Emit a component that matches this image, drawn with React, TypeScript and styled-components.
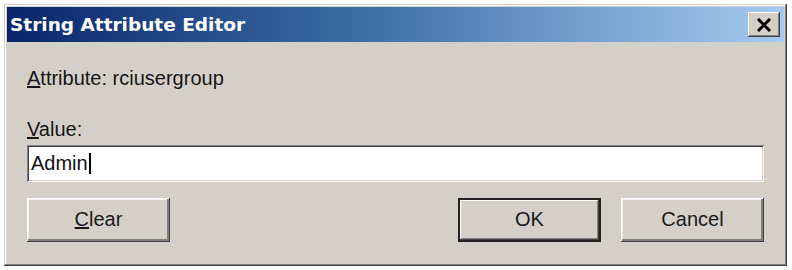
import React from "react";
import styled, { createGlobalStyle } from "styled-components";

const GlobalStyle = createGlobalStyle`
  html, body {
    margin: 0;
    padding: 0;
    background: #ffffff;
  }
  body {
    font-family: "Liberation Sans", Arial, sans-serif;
  }
`;

const Window = styled.div`
  box-sizing: border-box;
  margin: 4px 0 0 4px;
  width: 783px;
  height: 262px;
  padding: 3px;
  background: #d4d0c8;
  box-shadow: inset -1px -1px 0 #404040, inset 1px 1px 0 #d4d0c8,
    inset -2px -2px 0 #808080, inset 2px 2px 0 #ffffff;
  display: flex;
  flex-direction: column;
`;

const TitleBar = styled.div`
  height: 35px;
  display: flex;
  align-items: center;
  justify-content: space-between;
  padding: 0 4px 0 3px;
  background: linear-gradient(to right, #0a246a 0%, #3a6ea5 45%, #a6caf0 100%);
`;

const Title = styled.div`
  color: #ffffff;
  font-family: "DejaVu Sans", Verdana, sans-serif;
  font-weight: bold;
  font-size: 18.5px;
  line-height: 22px;
  white-space: nowrap;
`;

const CloseButton = styled.div`
  box-sizing: border-box;
  width: 32px;
  height: 25px;
  background: #d4d0c8;
  display: flex;
  align-items: center;
  justify-content: center;
  box-shadow: inset -1px -1px 0 #404040, inset 1px 1px 0 #ffffff,
    inset -2px -2px 0 #808080, inset 2px 2px 0 #d4d0c8;
`;

const Body = styled.div`
  flex: 1;
  display: flex;
  flex-direction: column;
  padding: 25px 20px 0 20px;
`;

const Label = styled.div<{ $gap?: number }>`
  font-size: 20px;
  line-height: 23px;
  color: #161616;
  margin-top: ${(p) => p.$gap ?? 0}px;
  white-space: nowrap;
`;

const TextBox = styled.div`
  box-sizing: border-box;
  margin-top: 4px;
  height: 37px;
  background: #ffffff;
  display: flex;
  align-items: center;
  padding: 0 4px;
  font-size: 20px;
  color: #111;
  box-shadow: inset 1px 1px 0 #808080, inset -1px -1px 0 #ffffff,
    inset 2px 2px 0 #404040, inset -2px -2px 0 #d4d0c8;
`;

const Caret = styled.span`
  display: inline-block;
  width: 2px;
  height: 21px;
  background: #000;
  margin-left: 1px;
`;

const ButtonRow = styled.div`
  margin-top: 16px;
  display: flex;
  gap: 20px;
`;

const Spacer = styled.div`
  flex: 1;
`;

const Button = styled.div<{ $default?: boolean }>`
  box-sizing: border-box;
  width: 143px;
  height: 44px;
  display: flex;
  align-items: center;
  justify-content: center;
  font-size: 20px;
  color: #1a1a1a;
  background: #d4d0c8;
  padding-bottom: 2px;
  box-shadow: ${(p) =>
    p.$default
      ? `inset 0 0 0 2px #222, inset -3px -3px 0 #404040, inset 3px 3px 0 #ffffff, inset -4px -4px 0 #808080`
      : `inset -1px -1px 0 #404040, inset 1px 1px 0 #ffffff, inset -3px -3px 0 #808080, inset 2px 2px 0 #f4f2ee`};
`;

export default function App() {
  return (
    <>
      <GlobalStyle />
      <Window>
        <TitleBar>
          <Title>String Attribute Editor</Title>
          <CloseButton>
            <svg width="16" height="14" viewBox="0 0 16 14">
              <path d="M2 1 L14 13 M14 1 L2 13" stroke="#000" strokeWidth="3" />
            </svg>
          </CloseButton>
        </TitleBar>
        <Body>
          <Label>
            <u>A</u>ttribute: rciusergroup
          </Label>
          <Label $gap={28}>
            <u>V</u>alue:
          </Label>
          <TextBox>
            Admin
            <Caret />
          </TextBox>
          <ButtonRow>
            <Button>
              <span>
                <u>C</u>lear
              </span>
            </Button>
            <Spacer />
            <Button $default>OK</Button>
            <Button>Cancel</Button>
          </ButtonRow>
        </Body>
      </Window>
    </>
  );
}
